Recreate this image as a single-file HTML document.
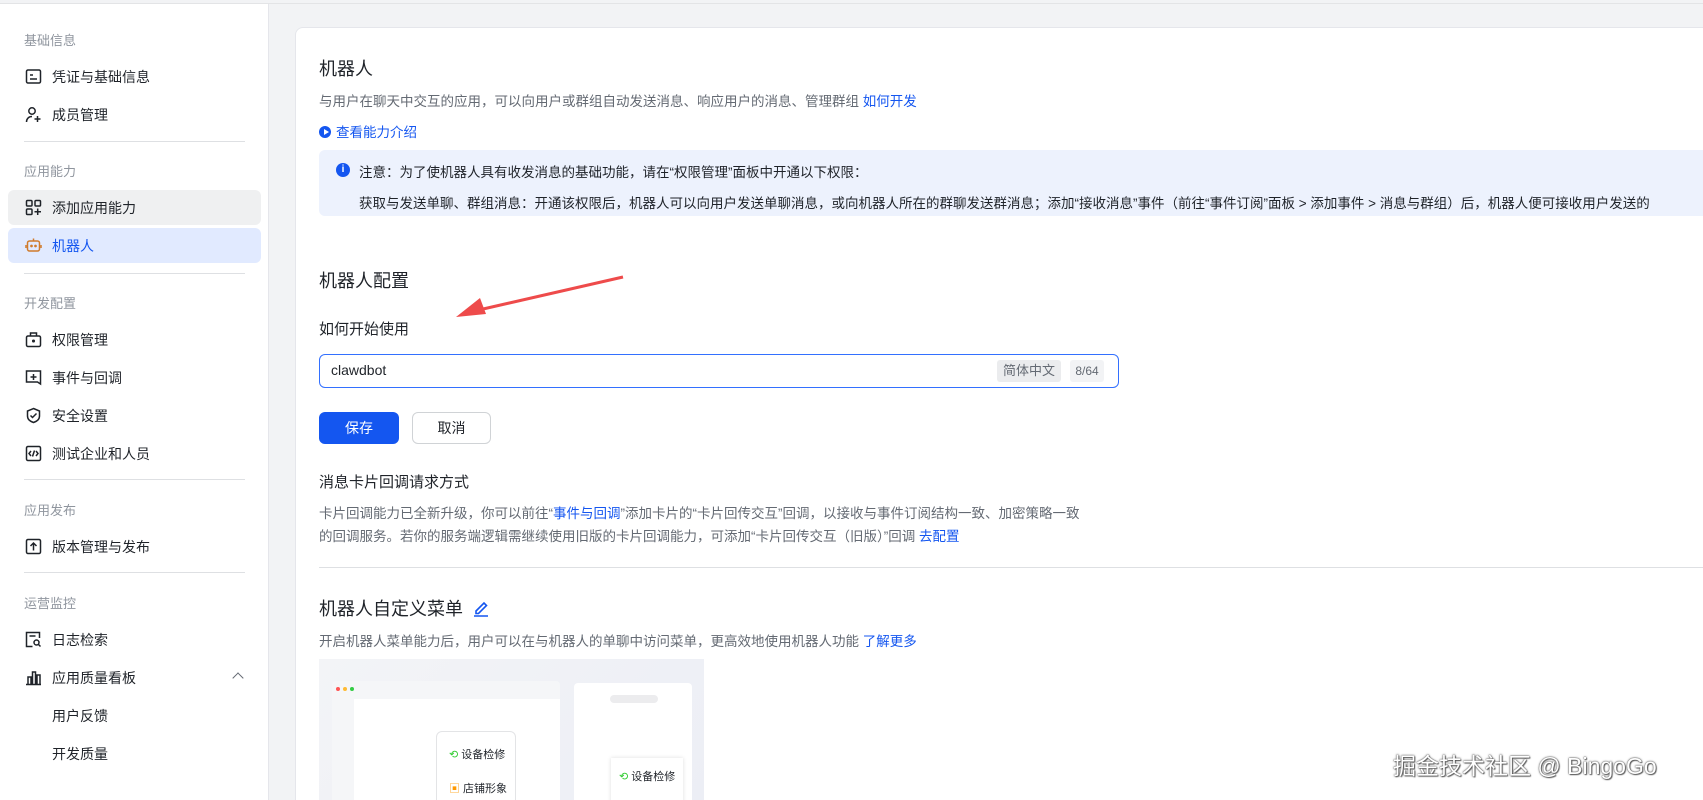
<!DOCTYPE html>
<html><head><meta charset="utf-8"><style>
*{margin:0;padding:0;box-sizing:border-box}
html,body{width:1703px;height:800px;overflow:hidden}
body{background:#f2f3f5;font-family:"Liberation Sans","Noto Sans CJK SC",sans-serif;color:#1f2329;position:relative}
.side{position:absolute;left:0;top:4px;bottom:0;width:269px;background:#fff;border-right:1px solid #e5e6eb}
.topl{position:absolute;left:0;top:0;width:1703px;height:4px;background:#f2f3f5;border-bottom:1px solid #e3e4e6}
.grp{position:absolute;left:24px;font-size:13px;color:#8f959e}
.it{position:absolute;left:8px;width:253px;height:35px;font-size:14px;display:flex;align-items:center;padding-left:44px;border-radius:6px}
.it svg{position:absolute;left:17px;top:9px}
.dv{position:absolute;left:24px;width:221px;height:1px;background:#dee0e3}
.card{position:absolute;left:295px;top:27px;width:1420px;bottom:-20px;background:#fff;border:1px solid #e5e6eb;border-radius:8px}
.a{position:absolute;white-space:nowrap}
.blue{color:#1456f0}
</style></head><body>
<div class="topl"></div>
<div class="side">
<div class="grp" style="top:26px">基础信息</div>
<div class="it" style="top:55px"><svg width="17" height="17" viewBox="0 0 17 17" fill="none" stroke="#1f2329" stroke-width="1.5"><rect x="1.5" y="2" width="14" height="13" rx="1.5"/><path d="M5 7h3M5 11h7"/></svg>凭证与基础信息</div>
<div class="it" style="top:93px"><svg width="17" height="17" viewBox="0 0 17 17" fill="none" stroke="#1f2329" stroke-width="1.5"><circle cx="7" cy="5" r="3.2"/><path d="M1.5 16c0-3.5 2.5-5.5 5.5-5.5M12.5 10v6M9.5 13h6"/></svg>成员管理</div>
<div class="dv" style="top:137px"></div>
<div class="grp" style="top:157px">应用能力</div>
<div class="it" style="top:186px;background:#eff0f1"><svg width="17" height="17" viewBox="0 0 17 17" fill="none" stroke="#1f2329" stroke-width="1.5"><rect x="1.5" y="1.5" width="5.5" height="5.5" rx="1"/><rect x="10" y="1.5" width="5.5" height="5.5" rx="1"/><rect x="1.5" y="10" width="5.5" height="5.5" rx="1"/><path d="M12.7 9.5v6.5M9.5 12.7h6.5"/></svg>添加应用能力</div>
<div class="it" style="top:224px;background:#e1eaff;color:#1456f0"><svg width="17" height="17" viewBox="0 0 17 17" fill="none" stroke="#d07b2c" stroke-width="1.5"><rect x="2.5" y="4" width="12" height="10" rx="2"/><path d="M8.5 1.5v2.5M1 8v3M16 8v3"/><circle cx="6.5" cy="9" r=".6" fill="#d07b2c"/><circle cx="10.5" cy="9" r=".6" fill="#d07b2c"/></svg>机器人</div>
<div class="dv" style="top:269px"></div>
<div class="grp" style="top:289px">开发配置</div>
<div class="it" style="top:318px"><svg width="17" height="17" viewBox="0 0 17 17" fill="none" stroke="#1f2329" stroke-width="1.5"><rect x="1.5" y="5" width="14" height="10.5" rx="1.5"/><path d="M5.5 5V2h6v3"/><circle cx="8.5" cy="10" r=".8" fill="#1f2329"/></svg>权限管理</div>
<div class="it" style="top:356px"><svg width="17" height="17" viewBox="0 0 17 17" fill="none" stroke="#1f2329" stroke-width="1.5"><path d="M1.5 2h14v13l-3-2h-11z"/><path d="M8.5 5v6M5.5 8h6"/></svg>事件与回调</div>
<div class="it" style="top:394px"><svg width="17" height="17" viewBox="0 0 17 17" fill="none" stroke="#1f2329" stroke-width="1.5"><path d="M8.5 1.5l6 2.5v5c0 3.5-3 5.5-6 6.5-3-1-6-3-6-6.5V4z"/><path d="M5.5 8.5l2 2 4-4"/></svg>安全设置</div>
<div class="it" style="top:432px"><svg width="17" height="17" viewBox="0 0 17 17" fill="none" stroke="#1f2329" stroke-width="1.5"><rect x="1.5" y="1.5" width="14" height="14" rx="1.5"/><path d="M6 6l-2 2.5 2 2.5M11 6l2 2.5-2 2.5M9.5 5.5l-2 6"/></svg>测试企业和人员</div>
<div class="dv" style="top:475px"></div>
<div class="grp" style="top:496px">应用发布</div>
<div class="it" style="top:525px"><svg width="17" height="17" viewBox="0 0 17 17" fill="none" stroke="#1f2329" stroke-width="1.5"><rect x="1.5" y="1.5" width="14" height="14" rx="1.5"/><path d="M8.5 12.5V5M5.5 8l3-3 3 3"/></svg>版本管理与发布</div>
<div class="dv" style="top:568px"></div>
<div class="grp" style="top:589px">运营监控</div>
<div class="it" style="top:618px"><svg width="17" height="17" viewBox="0 0 17 17" fill="none" stroke="#1f2329" stroke-width="1.5"><path d="M14.5 7V1.5h-13v14h6"/><circle cx="11.5" cy="11.5" r="2.5"/><path d="M13.5 13.5l2 2M4.5 5h6"/></svg>日志检索</div>
<div class="it" style="top:656px"><svg width="17" height="17" viewBox="0 0 17 17" fill="none" stroke="#1f2329" stroke-width="1.5"><path d="M1 15.5h15M3 15V8h3v7M7.5 15V3h3v12M12 15V6h3v9"/></svg>应用质量看板<span style="position:absolute;left:226px;top:14px;width:8px;height:8px;border-left:1.4px solid #646a73;border-top:1.4px solid #646a73;transform:rotate(45deg)"></span></div>
<div class="it" style="top:694px">用户反馈</div>
<div class="it" style="top:732px">开发质量</div>
</div>
<div class="card"></div>
<div class="a" style="left:319px;top:55px;font-size:18px">机器人</div>
<div class="a" style="left:319px;top:90px;font-size:13.5px;color:#646a73">与用户在聊天中交互的应用，可以向用户或群组自动发送消息、响应用户的消息、管理群组 <span class="blue">如何开发</span></div>
<div class="a blue" style="left:319px;top:121px;font-size:13.5px"><span style="display:inline-block;width:12px;height:12px;border-radius:50%;background:#1456f0;vertical-align:-1px;margin-right:5px;position:relative"><span style="position:absolute;left:4.5px;top:3px;border-left:5px solid #fff;border-top:3px solid transparent;border-bottom:3px solid transparent"></span></span>查看能力介绍</div>
<div style="position:absolute;left:319px;top:150px;width:1400px;height:66px;background:#edf2fd;border-radius:6px"></div>
<div style="position:absolute;left:336px;top:163px;width:14px;height:14px;border-radius:50%;background:#1456f0;color:#fff;font-size:10px;text-align:center;line-height:14px;font-weight:bold">i</div>
<div class="a" style="left:359px;top:161px;font-size:13.5px">注意：为了使机器人具有收发消息的基础功能，请在“权限管理”面板中开通以下权限：</div>
<div class="a" style="left:359px;top:192px;font-size:13.5px">获取与发送单聊、群组消息：开通该权限后，机器人可以向用户发送单聊消息，或向机器人所在的群聊发送群消息；添加“接收消息”事件（前往“事件订阅”面板 &gt; 添加事件 &gt; 消息与群组）后，机器人便可接收用户发送的</div>
<div class="a" style="left:319px;top:267px;font-size:18px">机器人配置</div>
<svg style="position:absolute;left:440px;top:270px" width="190" height="55"><path d="M183 7L30 42" stroke="#ee4b4b" stroke-width="3"/><path d="M16 47L40 28 46 44z" fill="#ee4b4b"/></svg>
<div class="a" style="left:319px;top:318px;font-size:15px">如何开始使用</div>
<div style="position:absolute;left:319px;top:354px;width:800px;height:34px;border:1px solid #3370ff;border-radius:6px"></div>
<div class="a" style="left:331px;top:362px;font-size:14px">clawdbot</div>
<div class="a" style="left:997px;top:360px;height:22px;width:64px;background:#ebecee;border-radius:3px;color:#646a73;font-size:13px;text-align:center;line-height:22px">简体中文</div>
<div class="a" style="left:1070px;top:360px;height:22px;width:34px;background:#f2f3f5;border-radius:3px;color:#646a73;font-size:12px;text-align:center;line-height:22px">8/64</div>
<div class="a" style="left:319px;top:412px;width:80px;height:32px;background:#1456f0;border-radius:6px;color:#fff;font-size:14px;text-align:center;line-height:32px">保存</div>
<div class="a" style="left:412px;top:412px;width:79px;height:32px;border:1px solid #d0d3d6;border-radius:6px;font-size:14px;text-align:center;line-height:30px">取消</div>
<div class="a" style="left:319px;top:471px;font-size:15px">消息卡片回调请求方式</div>
<div class="a" style="left:319px;top:502px;font-size:13.5px;color:#646a73;line-height:23px">卡片回调能力已全新升级，你可以前往“<span class="blue">事件与回调</span>”添加卡片的“卡片回传交互”回调，以接收与事件订阅结构一致、加密策略一致<br>的回调服务。若你的服务端逻辑需继续使用旧版的卡片回调能力，可添加“卡片回传交互（旧版）”回调 <span class="blue">去配置</span></div>
<div style="position:absolute;left:319px;top:567px;width:1400px;height:1px;background:#dee0e3"></div>
<div class="a" style="left:319px;top:595px;font-size:18px">机器人自定义菜单 <svg width="18" height="18" viewBox="0 0 18 18" style="vertical-align:-2px;margin-left:4px" fill="none" stroke="#1456f0" stroke-width="1.6"><path d="M4 12l8-8 2.5 2.5-8 8H4zM2 17h14"/></svg></div>
<div class="a" style="left:319px;top:630px;font-size:13.5px;color:#646a73">开启机器人菜单能力后，用户可以在与机器人的单聊中访问菜单，更高效地使用机器人功能 <span class="blue">了解更多</span></div>
<div style="position:absolute;left:319px;top:659px;width:385px;height:160px;background:linear-gradient(135deg,#f3f4f7,#eceef5);overflow:hidden">
 <div style="position:absolute;left:13px;top:22px;width:228px;height:140px;background:#f5f6f8;border-radius:4px">
  <div style="position:absolute;left:4px;top:6px;width:4px;height:4px;border-radius:50%;background:#f55"></div>
  <div style="position:absolute;left:11px;top:6px;width:4px;height:4px;border-radius:50%;background:#fb3"></div>
  <div style="position:absolute;left:18px;top:6px;width:4px;height:4px;border-radius:50%;background:#3c4"></div>
  <div style="position:absolute;left:22px;top:18px;width:206px;height:130px;background:#fff"></div>
  <div style="position:absolute;left:104px;top:50px;width:80px;height:100px;background:#fff;border:1px solid #e3e4e6;border-radius:6px;font-size:11px">
   <div style="position:absolute;left:12px;top:14px;white-space:nowrap"><span style="color:#3c3">⟲</span> 设备检修</div>
   <div style="position:absolute;left:12px;top:48px;white-space:nowrap"><span style="color:#f90">▣</span> 店铺形象</div>
  </div>
 </div>
 <div style="position:absolute;left:255px;top:24px;width:118px;height:140px;background:#fff;border-radius:4px">
  <div style="position:absolute;left:36px;top:12px;width:48px;height:8px;background:#ececee;border-radius:4px"></div>
  <div style="position:absolute;left:37px;top:75px;width:72px;height:70px;background:#fff;box-shadow:0 0 4px #ddd;font-size:11px">
   <div style="position:absolute;left:8px;top:10px;white-space:nowrap"><span style="color:#3c3">⟲</span> 设备检修</div>
   <div style="position:absolute;left:8px;top:40px;white-space:nowrap"><span style="color:#f90">▣</span> 店铺形象</div>
  </div>
 </div>
</div>
<div class="a" style="left:1393px;top:747px;font-size:23px;color:#fff;text-shadow:0 0 2px #555,0 0 1px #333,1px 1px 1px #666">掘金技术社区 @ BingoGo</div>
</body></html>
